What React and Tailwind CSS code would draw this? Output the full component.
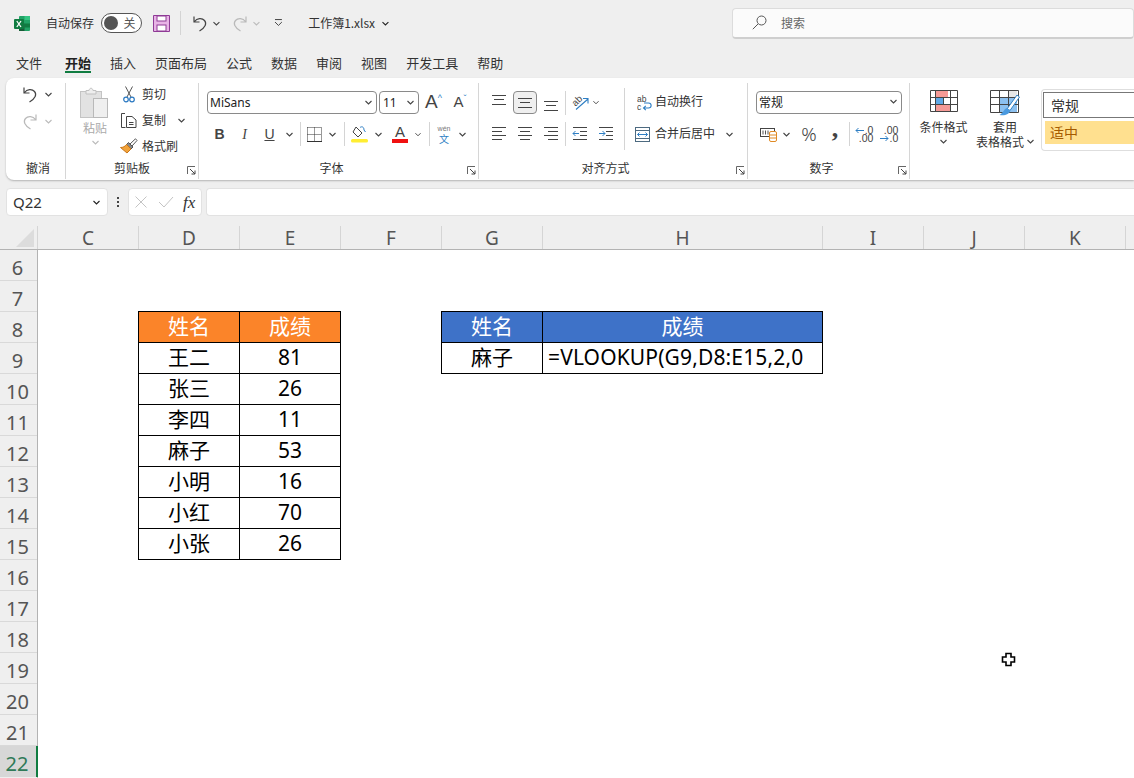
import React from "react";

const cjk = "font-['Noto_Sans_CJK_SC','Noto_Sans',sans-serif]";

function Chev({ className = "", color = "#444" }) {
  return (
    <svg width="7" height="5" viewBox="0 0 7 5" className={className}>
      <path d="M0.5 1 L3.5 4 L6.5 1" fill="none" stroke={color} strokeWidth="1.1" />
    </svg>
  );
}

function Slot({ className = "", children }) {
  return <div className={`flex items-center justify-center shrink-0 h-full ${className}`}>{children}</div>;
}

function Sep({ className = "" }) {
  return (
    <Slot className={className}>
      <div className="w-px h-[24px] bg-[#d4d4d4]" />
    </Slot>
  );
}

function Launcher() {
  return (
    <svg width="9" height="9" viewBox="0 0 9 9">
      <path d="M0.5 8 V0.5 H8" fill="none" stroke="#666" />
      <path d="M3 3 L8 8 M8 4.5 V8 H4.5" fill="none" stroke="#444" />
    </svg>
  );
}

function UndoIcon({ color = "#444", flip = false }) {
  return (
    <svg width="16" height="17" viewBox="0 0 16 17" className={flip ? "-scale-x-100" : ""}>
      <path d="M2 1.5 V7 H7.5 M2.5 6.5 C5 3 10 2.5 12.5 5.5 C15 8.5 13.5 12.5 7.5 16" fill="none" stroke={color} strokeWidth="1.2" />
    </svg>
  );
}

function AlignV({ pos }) {
  const ys = pos === "top" ? [1, 5.5, 10] : pos === "mid" ? [4, 8.5, 13] : [7, 11.5, 16];
  return (
    <svg width="16" height="18" viewBox="0 0 16 18">
      <path d={`M1 ${ys[0]}.5 H15 M3 ${Math.floor(ys[1])}.5 H13 M1 ${ys[2]}.5 H15`} stroke="#444" fill="none" />
    </svg>
  );
}

function AlignH({ pos }) {
  const short = pos === "left" ? "M1 5.5 H11 M1 13.5 H11" : pos === "center" ? "M3 5.5 H13 M3 13.5 H13" : "M5 5.5 H15 M5 13.5 H15";
  return (
    <svg width="16" height="16" viewBox="0 0 16 16">
      <path d={`M1 1.5 H15 M1 9.5 H15 ${short}`} stroke="#444" fill="none" />
    </svg>
  );
}

function IndentIcon({ out }) {
  return (
    <svg width="16" height="16" viewBox="0 0 16 16">
      <path d="M1 1.5 H15 M8 5.5 H15 M8 9.5 H15 M1 13.5 H15" stroke="#444" fill="none" />
      <path d={out ? "M7 7.5 H1 M3.5 5 L1 7.5 L3.5 10" : "M1 7.5 H7 M4.5 5 L7 7.5 L4.5 10"} stroke="#2f7fc4" fill="none" />
    </svg>
  );
}

function ExcelLogo() {
  return (
    <svg width="17" height="17" viewBox="0 0 17 17">
      <rect x="5" y="1" width="11" height="15" rx="1" fill="#21a366" />
      <rect x="10.5" y="1" width="5.5" height="4" fill="#33c481" />
      <rect x="10.5" y="8.5" width="5.5" height="4" fill="#107c41" />
      <rect x="5" y="8.5" width="5.5" height="7.5" fill="#185c37" />
      <rect x="0" y="4" width="10" height="10" rx="1" fill="#107c41" />
      <path d="M2.8 6 L7 12 M7 6 L2.8 12" stroke="#fff" strokeWidth="1.3" />
    </svg>
  );
}

function SaveIcon() {
  return (
    <svg width="17" height="17" viewBox="0 0 17 17">
      <path d="M0.5 0.5 H16.5 V16.5 H0.5 Z" fill="#e8b4e6" stroke="#8f3b96" />
      <rect x="4" y="1" width="9" height="5" fill="#fff" stroke="#8f3b96" />
      <rect x="4" y="10" width="9" height="6" fill="#fff" stroke="#8f3b96" />
    </svg>
  );
}

function PasteIcon() {
  return (
    <svg width="30" height="32" viewBox="0 0 30 32">
      <rect x="0.5" y="4.5" width="21" height="26" fill="#e2e2e2" stroke="#c4c4c4" />
      <path d="M6 7 V3.5 H9 C9.5 0.5 12.5 0.5 13 3.5 H16 V7 Z" fill="#eee" stroke="#c0c0c0" />
      <rect x="13.5" y="11.5" width="14" height="19" fill="#efefef" stroke="#b9b9b9" />
    </svg>
  );
}

function ScissorsIcon() {
  return (
    <svg width="12" height="17" viewBox="0 0 12 17">
      <path d="M2.5 0.5 L8 11 M9.5 0.5 L4 11" stroke="#555" fill="none" />
      <circle cx="3" cy="13.5" r="2.3" fill="none" stroke="#2b79c2" strokeWidth="1.2" />
      <circle cx="9" cy="13.5" r="2.3" fill="none" stroke="#2b79c2" strokeWidth="1.2" />
    </svg>
  );
}

function CopyIcon() {
  return (
    <svg width="16" height="15" viewBox="0 0 16 15">
      <path d="M4.5 14.5 H0.5 V0.5 H4" fill="none" stroke="#444" />
      <path d="M5.5 3.5 H11 L15 7 V14.5 H5.5 Z M8 9.5 H12.5 M8 11.5 H12.5" fill="#fff" stroke="#444" />
    </svg>
  );
}

function BrushIcon() {
  return (
    <svg width="18" height="16" viewBox="0 0 18 16">
      <path d="M10 6 L15.5 0.8 L17 2.5 L12 8 Z" fill="#fff" stroke="#555" />
      <path d="M8.5 4.5 L13 9 L11 11 L6.5 6.5 Z" fill="#888" stroke="#555" />
      <path d="M6.5 6.5 L11 11 L7 15 L0.5 9.5 C3 9.5 5 8.5 6.5 6.5 Z" fill="#f2a33a" stroke="#c8761a" />
    </svg>
  );
}

function BorderIcon() {
  return (
    <svg width="15" height="15" viewBox="0 0 15 15">
      <path d="M0.5 0.5 H14.5 V14.5 M0.5 0.5 V14.5 M7.5 0.5 V14.5 M0.5 7.5 H14.5" fill="none" stroke="#333" strokeDasharray="1 1" />
      <path d="M0 14.5 H15" stroke="#333" />
    </svg>
  );
}

function FillIcon() {
  return (
    <svg width="18" height="18" viewBox="0 0 18 18">
      <path d="M5 2 L11 8 L7 12 L2 7 Z" fill="#fff" stroke="#444" />
      <path d="M9 2.5 C11 1 13 2 13 5 M13 5 L14.5 7" fill="none" stroke="#2f7fc4" />
      <rect x="0" y="14" width="17" height="3.5" rx="1.5" fill="#ffee33" />
    </svg>
  );
}

function WrapIcon() {
  return (
    <svg width="15" height="16" viewBox="0 0 15 16">
      <text x="0" y="6.5" fontSize="8.5" fill="#444" className="font-['Liberation_Sans']">ab</text>
      <text x="0" y="14.5" fontSize="8.5" fill="#444" className="font-['Liberation_Sans']">c</text>
      <path d="M7 8 H11.5 C15 8 15 13 11.5 13 H6.5 M8.8 10.8 L6.5 13 L8.8 15.2" fill="none" stroke="#2f7fc4" strokeWidth="1.1" />
    </svg>
  );
}

function MergeIcon() {
  return (
    <svg width="15" height="15" viewBox="0 0 15 15">
      <rect x="0.5" y="0.5" width="14" height="14" fill="#fff" stroke="#4d6a80" />
      <path d="M0.5 3.5 H14.5 M0.5 11.5 H14.5" stroke="#4d6a80" />
      <path d="M2.5 7.5 H12.5 M4.5 5.5 L2.5 7.5 L4.5 9.5 M10.5 5.5 L12.5 7.5 L10.5 9.5" fill="none" stroke="#2f7fc4" />
    </svg>
  );
}

function OrientIcon() {
  return (
    <svg width="17" height="17" viewBox="0 0 17 17" className="overflow-visible">
      <path d="M4 15.5 L16 5 M11 4.5 H16 V9.5" fill="none" stroke="#2f7fc4" strokeWidth="1.1" />
      <text x="0" y="10" fontSize="9.5" fill="#444" transform="rotate(-45 5 7)" className="font-['Liberation_Sans']">ab</text>
    </svg>
  );
}

function AccountingIcon() {
  return (
    <svg width="18" height="15" viewBox="0 0 18 15">
      <rect x="0.5" y="1.5" width="14" height="8" fill="#fff" stroke="#444" />
      <path d="M3 3.5 V7.5 M5.5 3.5 V7.5 M8 3.5 V7.5" stroke="#555" />
      <rect x="9.5" y="4.5" width="7" height="10" rx="1.5" fill="#fff" stroke="#e08a24" />
      <path d="M9.5 8 H16.5 M9.5 11 H16.5" stroke="#e08a24" />
    </svg>
  );
}

function DecimalIcon({ more }) {
  return (
    <div className="flex flex-col items-end text-[10.5px] text-[#444] font-['Liberation_Sans']">
      <div className="flex items-center h-[8px] leading-[8px] gap-px">
        {more ? (
          <span>.00</span>
        ) : (
          <>
            <svg width="9" height="7" viewBox="0 0 9 7">
              <path d="M9 3.5 H1 M3.5 1 L1 3.5 L3.5 6" fill="none" stroke="#2f7fc4" />
            </svg>
            <span>.0</span>
          </>
        )}
      </div>
      <div className="flex items-center h-[8px] leading-[8px] gap-px">
        {more ? (
          <>
            <svg width="9" height="7" viewBox="0 0 9 7">
              <path d="M0 3.5 H8 M5.5 1 L8 3.5 L5.5 6" fill="none" stroke="#2f7fc4" />
            </svg>
            <span>.0</span>
          </>
        ) : (
          <span>.00</span>
        )}
      </div>
    </div>
  );
}

function CondFormatIcon() {
  return (
    <svg width="28" height="22" viewBox="0 0 28 22">
      <rect x="5" y="1" width="13" height="6" fill="#f59a96" />
      <rect x="5" y="8" width="8" height="6" fill="#5fa8e6" />
      <rect x="5" y="15" width="15" height="6" fill="#f59a96" />
      <path d="M0.5 0.5 H27.5 V21.5 H0.5 Z M0.5 7.5 H27.5 M0.5 14.5 H27.5 M5.5 0.5 V21.5 M13.5 7.5 V14.5 M20.5 0.5 V21.5" fill="none" stroke="#444" />
    </svg>
  );
}

function TableFormatIcon() {
  return (
    <svg width="30" height="26" viewBox="0 0 30 26">
      <rect x="9" y="7" width="18" height="15" fill="#8cc0ef" />
      <rect x="18" y="1" width="9" height="6" fill="#e6e6e6" />
      <path d="M0.5 0.5 H28.5 V22.5 H0.5 Z M0.5 7.5 H28.5 M0.5 14.5 H28.5 M9.5 0.5 V22.5 M18.5 0.5 V22.5" fill="none" stroke="#444" />
      <path d="M17 19 L27 5 L29.5 7 L20 20.5 Z" fill="#fff" stroke="#2f7fc4" />
      <path d="M17 18 C14 19 14 22 9.5 25 C15 26 19.5 24 20.5 20.5 Z" fill="#4a9ae0" />
    </svg>
  );
}

function RibbonGroup({ className = "", labelClass = "", label, launcher = true, children }) {
  return (
    <div className={`flex flex-col h-full shrink-0 ${className}`}>
      <div className="h-[82px] flex flex-col">{children}</div>
      <div className="flex items-center h-[15px]">
        <div className={`flex-1 text-center text-[12px] leading-[15px] text-[#333] ${labelClass}`}>{label}</div>
        {launcher && (
          <div className="w-[9px] h-[9px] mr-[2px] mt-[5px] flex">
            <Launcher />
          </div>
        )}
      </div>
    </div>
  );
}

function GroupLine() {
  return <div className="w-px h-[96px] mt-[5px] bg-[#d6d6d6] shrink-0" />;
}

function ComboBox({ className = "", text }) {
  return (
    <div className={`h-[23px] bg-white border border-[#8a8a8a] rounded-[4px] flex items-center justify-between pl-[2px] pr-[4px] text-[12px] text-[#222] shrink-0 ${className}`}>
      <span>{text}</span>
      <Chev />
    </div>
  );
}

const tabs = ["文件", "开始", "插入", "页面布局", "公式", "数据", "审阅", "视图", "开发工具", "帮助"];
const columns = [
  ["C", "w-[101px]"],
  ["D", "w-[101px]"],
  ["E", "w-[101px]"],
  ["F", "w-[101px]"],
  ["G", "w-[101px]"],
  ["H", "w-[280px]"],
  ["I", "w-[101px]"],
  ["J", "w-[101px]"],
  ["K", "w-[101px]"],
];
const rows = [6, 7, 8, 9, 10, 11, 12, 13, 14, 15, 16, 17, 18, 19, 20, 21];
const scores = [
  ["王二", "81"],
  ["张三", "26"],
  ["李四", "11"],
  ["麻子", "53"],
  ["小明", "16"],
  ["小红", "70"],
  ["小张", "26"],
];

function Cell({ className = "", children }) {
  return (
    <div className={`h-[31px] border-r border-b border-black flex items-center justify-center text-[21px] ${className}`}>
      {children}
    </div>
  );
}

export default function App() {
  return (
    <div className={`relative w-[1134px] h-[778px] overflow-hidden bg-[#efefef] text-[#333] ${cjk}`}>
      {/* Title bar */}
      <div className="h-[46px] flex items-center text-[12px]">
        <Slot className="w-[14px]" />
        <Slot className="w-[17px]"><ExcelLogo /></Slot>
        <div className="w-[48px] ml-[15px] whitespace-nowrap">自动保存</div>
        <div className="ml-[7px] w-[42px] h-[20px] rounded-full border border-[#555] bg-white flex items-center justify-between pl-[2px] pr-[6px]">
          <div className="w-[14px] h-[14px] rounded-full bg-[#555]" />
          <span className="text-[12px] text-[#555]">关</span>
        </div>
        <div className="ml-[11px]"><SaveIcon /></div>
        <Sep className="w-px ml-[10px]" />
        <div className="ml-[11px] flex"><UndoIcon /></div>
        <Chev className="ml-[5px]" />
        <div className="ml-[12px] flex"><UndoIcon color="#b9b9b9" flip /></div>
        <Chev className="ml-[5px]" color="#bbb" />
        <svg width="9" height="8" viewBox="0 0 9 8" className="ml-[14px]">
          <path d="M1 0.5 H8 M1 3 L4.5 6.5 L8 3" fill="none" stroke="#444" />
        </svg>
        <div className="ml-[25px] text-[12px] whitespace-nowrap w-[67px]">工作簿1.xlsx</div>
        <Chev className="ml-[7px]" color="#222" />
        <div className="ml-[343px] w-[402px] h-[31px] bg-[#fbfbfb] border border-[#dcdcdc] border-b-2 border-b-[#cfcfcf] rounded-[4px] flex items-center pl-[19px] text-[12px] text-[#666] shrink-0">
          <svg width="15" height="15" viewBox="0 0 15 15">
            <circle cx="9.5" cy="5.5" r="4.5" fill="none" stroke="#555" />
            <path d="M6 9 L0.8 14.2" stroke="#555" />
          </svg>
          <span className="ml-[14px]">搜索</span>
        </div>
      </div>

      {/* Ribbon tabs */}
      <div className="h-[32px] flex pl-[16px] gap-[19px] text-[13px] text-[#333]">
        {tabs.map((tab, i) => (
          <div
            key={tab}
            className={`relative h-[27px] leading-[34px] whitespace-nowrap ${i === 0 ? "mr-[4px]" : ""} ${i === 1 ? "font-bold text-[#222] border-b-[2px] border-[#107c41]" : ""}`}
          >
            {tab}
          </div>
        ))}
      </div>

      {/* Ribbon */}
      <div className="ml-[6px] h-[102px] bg-white rounded-l-[8px] shadow-[0_1px_2px_rgba(0,0,0,0.25)] flex text-[12px]">
        <RibbonGroup className="w-[59px]" labelClass="pl-[5px]" label="撤消" launcher={false}>
          <div className="h-[28px] mt-[2px] flex items-center pl-[16px]">
            <UndoIcon />
            <Chev className="ml-[7px]" />
          </div>
          <div className="h-[26px] flex items-center pl-[16px]">
            <UndoIcon color="#b9b9b9" flip />
            <Chev className="ml-[7px]" color="#bbb" />
          </div>
        </RibbonGroup>
        <GroupLine />

        <RibbonGroup className="w-[132px]" labelClass="pl-[11px]" label="剪贴板">
          <div className="flex h-full">
            <div className="w-[48px] ml-[5px] pt-[9px] flex flex-col items-center">
              <PasteIcon />
              <span className="text-[#aaa] leading-[18px]">粘贴</span>
              <Chev className="mt-[3px]" color="#bbb" />
            </div>
            <div className="flex flex-col pt-[3px] ml-[1px]">
              <div className="h-[26px] flex items-center">
                <Slot className="w-[18px]"><ScissorsIcon /></Slot>
                <span className="ml-[4px]">剪切</span>
              </div>
              <div className="h-[26px] flex items-center">
                <Slot className="w-[18px]"><CopyIcon /></Slot>
                <span className="ml-[4px]">复制</span>
                <Chev className="ml-[12px]" />
              </div>
              <div className="h-[26px] flex items-center">
                <Slot className="w-[18px]"><BrushIcon /></Slot>
                <span className="ml-[4px]">格式刷</span>
              </div>
            </div>
          </div>
        </RibbonGroup>
        <GroupLine />

        <RibbonGroup className="w-[279px]" labelClass="pr-[3px]" label="字体">
          <div className="h-[23px] mt-[13px] ml-[8px] flex items-center">
            <ComboBox className="w-[170px] font-['Noto_Sans']" text="MiSans" />
            <ComboBox className="w-[40px] ml-[2px] font-['Noto_Sans'] pl-[3px]" text="11" />
            <Slot className="w-[28px] text-[19px] text-[#444] font-['Liberation_Sans'] pl-[1px]">A<sup className="text-[9px] text-[#2f7fc4]">^</sup></Slot>
            <Slot className="w-[26px] text-[15px] text-[#444] font-['Liberation_Sans']">A<sup className="text-[9px] text-[#2f7fc4]">ˇ</sup></Slot>
          </div>
          <div className="h-[24px] mt-[8px] ml-[8px] flex items-center text-[#444]">
            <Slot className="w-[25px] font-bold text-[14px] font-['Liberation_Sans']">B</Slot>
            <Slot className="w-[25px] italic text-[14px] font-['Liberation_Serif']">I</Slot>
            <Slot className="w-[25px] underline text-[14px] font-['Liberation_Sans']">U</Slot>
            <Slot className="w-[14px]"><Chev /></Slot>
            <Sep className="w-[8px]" />
            <Slot className="w-[20px]"><BorderIcon /></Slot>
            <Slot className="w-[17px]"><Chev /></Slot>
            <Sep className="w-[7px]" />
            <Slot className="w-[23px]"><FillIcon /></Slot>
            <Slot className="w-[14px]"><Chev /></Slot>
            <Slot className="w-[30px]">
              <div className="flex flex-col items-center w-[16px] text-[15px] leading-[14px] font-['Liberation_Sans']">
                A
                <div className="w-[16px] h-[4px] bg-[#f01010]" />
              </div>
            </Slot>
            <Slot className="w-[6px]"><Chev /></Slot>
            <Sep className="w-[16px]" />
            <Slot className="w-[14px]">
              <div className="flex flex-col items-center">
                <span className="h-[8px] text-[7px] leading-[8px] text-[#777] font-['Liberation_Sans']">wén</span>
                <span className="h-[11px] text-[10px] leading-[11px] text-[#2f7fc4]">文</span>
              </div>
            </Slot>
            <Slot className="w-[22px]"><Chev /></Slot>
          </div>
        </RibbonGroup>
        <GroupLine />

        <RibbonGroup className="w-[268px]" labelClass="pr-[4px]" label="对齐方式">
          <div className="h-[23px] mt-[13px] ml-[8px] flex items-center">
            <Slot className="w-[24px]"><AlignV pos="top" /></Slot>
            <Slot className="w-[24px] ml-[2px] bg-[#efefef] border border-[#8a8a8a] rounded-[4px]"><AlignV pos="mid" /></Slot>
            <Slot className="w-[24px] ml-[2px]"><AlignV pos="bot" /></Slot>
            <Sep className="w-[4px]" />
            <Slot className="w-[26px]"><OrientIcon /></Slot>
            <Slot className="w-[6px]"><Chev /></Slot>
            <div className="w-px h-[30px] ml-[25px] self-start -mt-[3px] bg-[#d4d4d4]" />
            <Slot className="w-[15px] ml-[12px]"><WrapIcon /></Slot>
            <span className="ml-[3px] pb-[3px] whitespace-nowrap">自动换行</span>
          </div>
          <div className="h-[24px] mt-[8px] ml-[8px] flex items-center">
            <Slot className="w-[24px]"><AlignH pos="left" /></Slot>
            <Slot className="w-[24px] ml-[2px]"><AlignH pos="center" /></Slot>
            <Slot className="w-[24px] ml-[2px]"><AlignH pos="right" /></Slot>
            <Sep className="w-[4px]" />
            <Slot className="w-[26px]"><IndentIcon out /></Slot>
            <Slot className="w-[26px]"><IndentIcon /></Slot>
            <div className="w-px h-[32px] ml-[5px] self-start -mt-[4px] bg-[#d4d4d4]" />
            <Slot className="w-[15px] ml-[10px]"><MergeIcon /></Slot>
            <span className="ml-[5px] pb-[2px] whitespace-nowrap">合并后居中</span>
            <Chev className="ml-[11px]" />
          </div>
        </RibbonGroup>
        <GroupLine />

        <RibbonGroup className="w-[161px]" labelClass="pr-[3px]" label="数字">
          <div className="h-[23px] mt-[13px] ml-[8px] flex items-center">
            <ComboBox className="w-[146px] pb-[2px]" text="常规" />
          </div>
          <div className="h-[24px] mt-[8px] ml-[8px] flex items-center text-[#444]">
            <Slot className="w-[26px]"><AccountingIcon /></Slot>
            <Slot className="w-[8px]"><Chev /></Slot>
            <Slot className="w-[38px] text-[19px] font-light font-['Noto_Sans']">%</Slot>
            <Slot className="w-[14px] text-[26px] font-bold font-['Liberation_Serif'] pb-[12px]">,</Slot>
            <Sep className="w-[14px]" />
            <Slot className="w-[16px]"><DecimalIcon /></Slot>
            <Slot className="w-[34px]"><DecimalIcon more /></Slot>
          </div>
        </RibbonGroup>
        <GroupLine />

        {/* Styles */}
        <div className="flex flex-1 min-w-0 overflow-hidden h-[82px] pt-[12px]">
          <div className="w-[63px] flex flex-col items-center shrink-0 ml-[2px]">
            <CondFormatIcon />
            <span className="mt-[7px] leading-[16px]">条件格式</span>
            <Chev className="mt-[4px]" />
          </div>
          <div className="w-[62px] flex flex-col items-center shrink-0 -ml-px">
            <TableFormatIcon />
            <span className="mt-[3px] leading-[15px]">套用</span>
            <div className="flex items-center whitespace-nowrap leading-[15px]">
              表格格式
              <Chev className="ml-[3px]" />
            </div>
          </div>
          <div className="ml-[5px] -mt-[1px] flex-1 h-[62px] border border-[#dedede] border-r-0 rounded-l-[4px] pl-[1px] pt-[2px]">
            <div className="h-[26px] border border-[#777] border-r-0 bg-white flex items-center pl-[7px] text-[#333] text-[14px]">常规</div>
            <div className="h-[23px] mt-[3px] ml-[2px] bg-[#ffe08f] flex items-center pl-[5px] text-[#a55a00] text-[14px]">适中</div>
          </div>
        </div>
      </div>

      {/* Formula bar */}
      <div className="mt-[8px] h-[28px] flex items-stretch">
        <div className="ml-[6px] w-[102px] bg-white border border-[#e2e2e2] rounded-[4px] flex items-center justify-between pl-[6px] pr-[7px] text-[15px] text-[#333] font-['Noto_Sans']">
          Q22
          <Chev color="#222" />
        </div>
        <Slot className="w-[20px] text-[#444]">
          <div className="flex flex-col gap-[2px]">
            <div className="w-[2px] h-[2px] bg-[#444]" />
            <div className="w-[2px] h-[2px] bg-[#444]" />
            <div className="w-[2px] h-[2px] bg-[#444]" />
          </div>
        </Slot>
        <div className="w-[74px] bg-white border border-[#e2e2e2] rounded-[4px] flex items-center pl-[6px] shrink-0">
          <svg width="12" height="12" viewBox="0 0 12 12">
            <path d="M0.5 0.5 L11.5 11.5 M11.5 0.5 L0.5 11.5" stroke="#c4c4c4" />
          </svg>
          <svg width="16" height="12" viewBox="0 0 16 12" className="ml-[11px]">
            <path d="M1 6 L6 11 L15 1" fill="none" stroke="#c4c4c4" />
          </svg>
          <span className="ml-[9px] italic text-[17px] text-[#333] font-['Liberation_Serif'] leading-none">fx</span>
        </div>
        <div className="ml-[4px] flex-1 bg-white border border-[#e2e2e2] border-r-0 rounded-l-[4px]" />
      </div>

      {/* Column header */}
      <div className="mt-[10px] h-[24px] flex border-b border-[#b3b3b3] text-[19px] leading-[24px] text-[#555] font-['Noto_Sans']">
        <div className="w-[38px] shrink-0 border-r border-[#d5d5d5] flex items-center justify-end pr-[3px]">
          <svg width="18" height="18" viewBox="0 0 18 18">
            <path d="M18 0 V18 H0 Z" fill="#dcdcdc" />
          </svg>
        </div>
        {columns.map(([name, width]) => (
          <div key={name} className={`${width} shrink-0 text-center border-r border-[#d5d5d5]`}>
            {name}
          </div>
        ))}
      </div>

      {/* Sheet */}
      <div className="flex">
        <div className="w-[38px] shrink-0 border-r border-[#b3b3b3] text-[20px] text-[#555] font-['Noto_Sans']">
          {rows.map((row) => (
            <div key={row} className="h-[31px] border-b border-[#d9d9d9] flex items-center justify-center pr-[2px] pt-[5px]">
              {row}
            </div>
          ))}
          <div className="h-[31px] -mr-px bg-[#d7d7d7] border-r-2 border-[#107c41] text-[#2f7a57] flex items-center justify-center pr-[2px] pt-[5px]">
            22
          </div>
        </div>
        <div className="flex-1 h-[528px] bg-white grid grid-cols-[101px_101px_101px_101px_101px_280px_1fr] grid-rows-[repeat(17,31px)] text-black font-['Noto_Sans','Noto_Sans_CJK_SC',sans-serif]">
          <div className="col-start-2 col-span-2 row-start-3 row-span-8 self-start -ml-px -mt-px w-[203px] border-l border-t border-black grid grid-cols-[101px_101px]">
            <Cell className="bg-[#fb8429] text-white">姓名</Cell>
            <Cell className="bg-[#fb8429] text-white">成绩</Cell>
            {scores.map(([name, score]) => (
              <React.Fragment key={name}>
                <Cell>{name}</Cell>
                <Cell>{score}</Cell>
              </React.Fragment>
            ))}
          </div>
          <div className="col-start-5 col-span-2 row-start-3 row-span-2 self-start -ml-px -mt-px w-[382px] border-l border-t border-black grid grid-cols-[101px_280px]">
            <Cell className="bg-[#3e72c8] text-white">姓名</Cell>
            <Cell className="bg-[#3e72c8] text-white">成绩</Cell>
            <Cell>麻子</Cell>
            <Cell className="justify-start pl-[5px] whitespace-nowrap tracking-[0.14px]">=VLOOKUP(G9,D8:E15,2,0</Cell>
          </div>
        </div>
      </div>

      {/* Mouse cursor */}
      <svg width="15" height="15" viewBox="0 0 15 15" className="absolute left-[1001px] top-[652px]">
        <path d="M5 1.5 H10 V5 H13.5 V10 H10 V13.5 H5 V10 H1.5 V5 H5 Z" fill="#fff" stroke="#000" strokeWidth="1.6" />
      </svg>
    </div>
  );
}
